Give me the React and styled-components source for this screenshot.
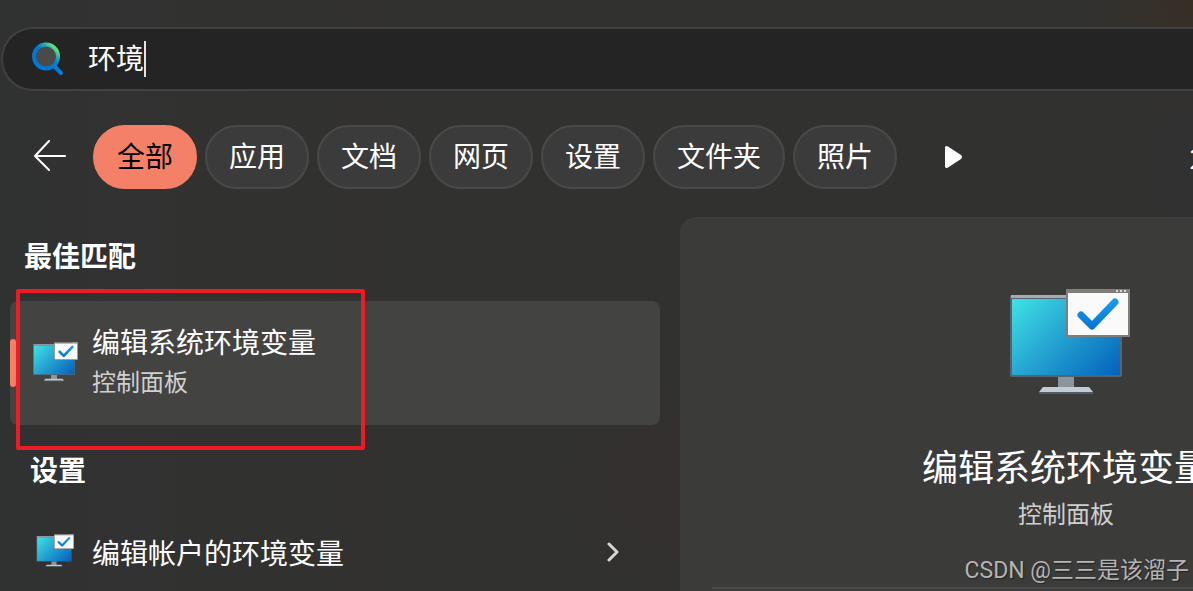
import React, { useId, useState } from 'react';
import styled, { createGlobalStyle } from 'styled-components';

const filters = ['全部', '应用', '文档', '网页', '设置', '文件夹', '照片'];

const SearchIcon = () => (
  <svg width="32" height="34" viewBox="0 0 32 34" fill="none" aria-hidden="true">
    <defs>
      <linearGradient id="lens" x1="6" y1="24" x2="25" y2="4" gradientUnits="userSpaceOnUse">
        <stop offset="0.5" stopColor="#0078d4" />
        <stop offset="0.7" stopColor="#22a5b4" />
        <stop offset="0.9" stopColor="#5fe07c" />
      </linearGradient>
    </defs>
    <path d="M22 24l7 7" stroke="#0a7bd8" strokeWidth="4" strokeLinecap="round" />
    <circle cx="14" cy="14.500" r="12" fill="#4a4a4a" stroke="url(#lens)" strokeWidth="4" />
  </svg>
);

const MonitorIcon = ({ width }) => {
  const id = useId();
  return (
    <svg width={width} viewBox="-8 0 128 106" fill="none" aria-hidden="true">
      <defs>
        <linearGradient id={`${id}screen`} x1="2" y1="10" x2="92" y2="100" gradientUnits="userSpaceOnUse">
          <stop offset="0" stopColor="#3fe3e6" />
          <stop offset="0.45" stopColor="#26a6d2" />
          <stop offset="1" stopColor="#0464bd" />
        </linearGradient>
        <linearGradient id={`${id}check`} x1="90" y1="12" x2="90" y2="38" gradientUnits="userSpaceOnUse">
          <stop offset="0" stopColor="#1a9be6" />
          <stop offset="1" stopColor="#0876d6" />
        </linearGradient>
      </defs>
      <path d="M0 8q0-2 2-2h108q2 0 2 2v78q0 2-2 2H2q-2 0-2-2z" fill="#56646f" />
      <path d="M1 6h110v3H1z" fill="#a3abb3" />
      <path d="M2 10h108v76H2z" fill={`url(#${id}screen)`} />
      <path d="M48 88h16v11H48z" fill="#8b959e" />
      <path d="M33 98h46l4 5H29z" fill="#c3cbd3" />
      <path d="M29 103h54v2H29z" fill="#505c66" />
      <path d="M56 0h64v48H56z" fill="#807e7b" />
      <path d="M58 4h60v42H58z" fill="#fafafa" />
      <path d="M106 2h2m2 0h2m2 0h2" stroke="#d8d8d8" strokeWidth="2" />
      <path
        d="M71 26l11 11 23-24"
        stroke={`url(#${id}check)`}
        strokeWidth="7"
        strokeLinecap="round"
        strokeLinejoin="round"
      />
    </svg>
  );
};

const App = () => {
  const [query, setQuery] = useState('环境');
  const [active, setActive] = useState('全部');

  return (
    <>
      <GlobalStyle />
      <Page>
        <SearchBar>
          <SearchIcon />
          <SearchField
            aria-label="搜索"
            value={query}
            onChange={e => setQuery(e.target.value)}
            style={{ width: `${query.length}em` }}
          />
          <Caret />
        </SearchBar>

        <FilterBar>
          <IconButton aria-label="返回">
            <svg width="34" height="34" viewBox="0 0 34 34" fill="none" stroke="#fff" strokeWidth="2" strokeLinecap="round" strokeLinejoin="round">
              <path d="M32 16H2M16 1L2 16l14 14" />
            </svg>
          </IconButton>
          <Pills>
            {filters.map(name => (
              <Pill key={name} $active={name === active} onClick={() => setActive(name)}>
                {name}
              </Pill>
            ))}
          </Pills>
          <IconButton aria-label="更多">
            <svg width="18" height="24" viewBox="0 0 18 24" fill="#fff">
              <path d="M0 3Q0 0 3 1.500L16 10Q18 12 16 14L3 22.500Q0 24 0 21z" />
            </svg>
          </IconButton>
          <Points>2</Points>
        </FilterBar>

        <Content>
          <Results>
            <Heading>最佳匹配</Heading>
            <BestMatch>
              <Accent />
              <IconBox>
                <MonitorIcon width={48} />
              </IconBox>
              <div>
                <ItemTitle>编辑系统环境变量</ItemTitle>
                <ItemType>控制面板</ItemType>
              </div>
              <Highlight />
            </BestMatch>
            <Heading $indent>设置</Heading>
            <ResultRow>
              <IconBox>
                <MonitorIcon width={40} />
              </IconBox>
              <ItemTitle>编辑帐户的环境变量</ItemTitle>
              <Chevron width="14" height="20" viewBox="0 0 14 20" aria-hidden="true">
                <path d="M3 2l8 8-8 8" />
              </Chevron>
            </ResultRow>
          </Results>

          <Preview>
            <MonitorIcon width={128} />
            <PreviewTitle>编辑系统环境变量</PreviewTitle>
            <ItemType>控制面板</ItemType>
            <Divider />
          </Preview>
        </Content>
        <Watermark>CSDN @三三是该溜子</Watermark>
      </Page>
    </>
  );
};

export default App;

const GlobalStyle = createGlobalStyle`
  * {
    box-sizing: border-box;
  }

  body {
    margin: 0;
    overflow: hidden;
    background: #313131;
    color: #fff;
    font-family: 'Noto Sans CJK SC', sans-serif;
    font-size: 28px;
  }

  button,
  input {
    padding: 0;
    border: 0;
    background: none;
    color: inherit;
    font: inherit;
  }

  svg {
    display: block;
    flex: none;
  }
`;

const Page = styled.div`
  position: relative;
  display: flex;
  flex-direction: column;
  min-height: 100vh;
  padding-top: 27px;
  overflow: hidden;
  background:
    radial-gradient(circle at 100% 0, #372f26 0, transparent 120px),
    radial-gradient(circle at 56% 82%, #35302f 0, transparent 120px),
    linear-gradient(90deg, #303231, #323130 30%, #31312f 55%, #313131);
`;

const SearchBar = styled.div`
  display: flex;
  align-items: center;
  height: 64px;
  margin-left: 1px;
  padding-left: 29px;
  border: 2px solid #40403f;
  border-right: 0;
  border-radius: 32px 0 0 32px;
  background: #242424;
`;

const SearchField = styled.input`
  height: 40px;
  margin-left: 24px;
  padding-bottom: 4px;
  outline: none;
  caret-color: transparent;
`;

const Caret = styled.span`
  width: 2px;
  height: 36px;
  background: #e4e4e4;
`;

const FilterBar = styled.div`
  display: flex;
  align-items: center;
  margin-top: 34px;
  padding-left: 33px;
`;

const IconButton = styled.button`
  flex: none;
`;

const Pills = styled.div`
  display: flex;
  gap: 8px;
  margin: 0 48px 0 26px;
`;

const Pill = styled.button`
  flex: none;
  height: 64px;
  padding: 0 22px 4px;
  border: 2px solid ${props => (props.$active ? '#f48067' : '#4a4948')};
  border-radius: 32px;
  background: ${props => (props.$active ? '#f48067' : '#3c3b3b')};
  color: ${props => (props.$active ? '#000' : '#fff')};
  white-space: nowrap;
`;

const Points = styled.span`
  margin: 0 -12px 0 auto;
`;

const Content = styled.div`
  display: flex;
  flex: 1;
  gap: 20px;
  margin-top: 28px;
`;

const Results = styled.div`
  flex: none;
  width: 660px;
  padding: 18px 0 0 10px;
`;

const Heading = styled.h2`
  margin: 0;
  padding-left: ${props => (props.$indent ? '20px' : '14px')};
  font-size: 28px;
  font-weight: 700;
  line-height: 40px;
`;

const BestMatch = styled.div`
  position: relative;
  display: flex;
  align-items: center;
  gap: 14px;
  margin: 26px 0 24px;
  padding: 22px 20px;
  border-radius: 8px;
  background: #434342;
`;

const Accent = styled.span`
  position: absolute;
  top: 38px;
  left: 0;
  width: 6px;
  height: 48px;
  border-radius: 3px;
  background: #f48067;
`;

const Highlight = styled.div`
  position: absolute;
  top: -12px;
  left: 6px;
  width: 349px;
  height: 161px;
  border: 4px solid #ed1c24;
  border-radius: 2px;
  pointer-events: none;
`;

const IconBox = styled.div`
  display: flex;
  justify-content: center;
  width: 48px;
  padding-bottom: 2px;
`;

const ItemTitle = styled.div`
  line-height: 36px;
`;

const ItemType = styled.div`
  color: #cfcfcf;
  font-size: 24px;
  line-height: 44px;
`;

const ResultRow = styled.div`
  display: flex;
  align-items: center;
  gap: 14px;
  height: 72px;
  margin-top: 27px;
  padding: 0 40px 0 20px;
`;

const Chevron = styled.svg`
  margin-left: auto;
  fill: none;
  stroke: #d6d6d6;
  stroke-width: 3;
  stroke-linecap: round;
  stroke-linejoin: round;
`;

/* The pane keeps its full width and runs off narrow windows */
const Preview = styled.div`
  display: flex;
  flex: 1 0 auto;
  flex-direction: column;
  align-items: center;
  min-width: 772px;
  padding: 72px 32px 0;
  border-radius: 16px 0 0 0;
  background: #3b3b3a;
`;

const PreviewTitle = styled.h1`
  margin: 46px 0 2px;
  font-size: 36px;
  font-weight: 400;
  line-height: 48px;
`;

const Divider = styled.hr`
  align-self: stretch;
  height: 2px;
  margin: 52px 0 0;
  border: 0;
  background: #4a4a4a;
`;

const Watermark = styled.div`
  position: absolute;
  right: 4px;
  bottom: 4px;
  color: #b4b4b4;
  font-family: Roboto, 'Noto Sans CJK SC', sans-serif;
  font-size: 23px;
  line-height: 32px;
  text-shadow: 1px 1px 1px #222;
`;
